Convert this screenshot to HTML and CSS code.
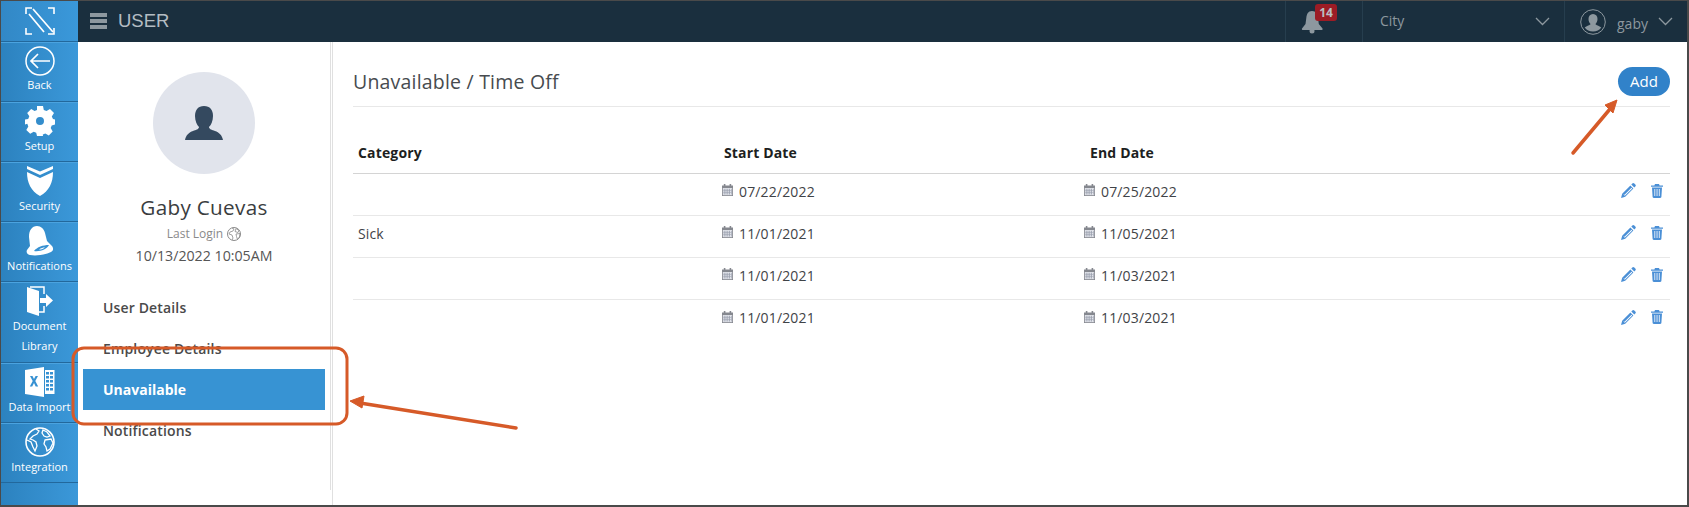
FILE: index.html
```html
<!DOCTYPE html>
<html lang="en">
<head>
<meta charset="utf-8">
<title>User</title>
<link rel="stylesheet" href="styles.css">
</head>
<body>
<svg class="defs" width="0" height="0">
  <symbol id="cal" viewBox="0 0 11 12">
    <path fill="#85888f" d="M0 1.500h1.800V0h1.600v1.500h4.200V0h1.600v1.500H11V12H0z"/>
    <path fill="#e2e4ea" d="M.8 4h9.400v7.200H.8z"/>
    <path fill="#9a9fae" d="M1.800 4.800h.8v5.600h-.8zM3.600 4.800h.8v5.600h-.8zM5.400 4.800h.8v5.600h-.8zM7.200 4.800h.8v5.600h-.8zM9 4.800h.6v5.600H9zM1.200 6.300h8.600v.5H1.200zM1.200 8.200h8.600v.5H1.200z"/>
  </symbol>
  <symbol id="pen" viewBox="0 0 15 15">
    <path fill="#4a8fd6" d="M11.300.6a1.400 1.400 0 0 1 2 0l1 1a1.400 1.400 0 0 1 0 2l-1 1-3-3zM9.400 2.500l3 3-8.200 8.200L0 15l1.200-4.200zM2.200 11.200l1.600 1.600 7.400-7.400-.7-.7-7 7z"/>
  </symbol>
  <symbol id="bin" viewBox="0 0 12 14">
    <path fill="#4a8fd6" d="M4 0h4l.6 1.400H12v1.400H0V1.400h3.400zM1 3.600h10l-.6 9.200c0 .7-.5 1.200-1.200 1.200H2.800c-.7 0-1.200-.5-1.200-1.200z"/>
    <path fill="#cfe0f3" d="M3.200 5h1.100v7H3.200zM5.500 5h1.100v7H5.500zM7.800 5h1.100v7H7.800z"/>
  </symbol>
</svg>
<div class="frame">
  <nav class="rail">
    <div class="rail-logo">
      <svg width="30" height="28" viewBox="0 0 30 28" fill="none" stroke="#fff" stroke-width="1.600">
        <path d="M1 7V1h6M23 1h6v6M1 21v6h6M29 21v6h-6"/>
        <path d="M8 2l20 23M4 7l15 18" stroke-width="1.700"/>
      </svg>
    </div>
    <a class="rail-item rail-back">
      <svg class="rail-icon" width="30" height="30" viewBox="0 0 30 30" fill="none" stroke="#fff" stroke-width="1.500">
        <circle cx="15" cy="15" r="14"/>
        <path d="M25 15H6M13 8l-7 7 7 7" stroke-width="1.700"/>
      </svg>
      <span>Back</span>
    </a>
    <a class="rail-item">
      <svg class="rail-icon" width="30" height="30" viewBox="0 0 30 30">
        <path fill="#fff" fill-rule="evenodd" d="M12 0h6l.8 4 2.700 1.100L25 3l4 4-2.200 3.400L28 13l2 .5v5l-3.300.9-1 2.600 2 3.500-3.900 3.900-3.500-2-2.500 1L18 30h-6l-.8-3.200-2.500-1-3.500 2-3.900-3.900 2-3.500-1-2.600L0 18.500v-5l3.200-.6 1.100-2.600L2.200 7l4-4 3.400 2.100L12 4zM15 11a4 4 0 1 0 0 8 4 4 0 0 0 0-8z"/>
      </svg>
      <span>Setup</span>
    </a>
    <a class="rail-item">
      <svg class="rail-icon" width="28" height="30" viewBox="0 0 28 30">
        <path fill="#fff" d="M1 0l13 5.500L27 0v3L14 9 1 3zM1 6l13 6 13-6c0 11-4 19-13 24C5 25 1 17 1 6z"/>
      </svg>
      <span>Security</span>
    </a>
    <a class="rail-item">
      <svg class="rail-icon" width="30" height="30" viewBox="0 0 30 30">
        <path fill="#fff" d="M12 0c4 0 7 3 8 7l2 8 5 5c2 3 1 5-1 6-6 3-15 4-21 3-3-.5-4-3-3-5l3-4-1-9C4 4 7 0 12 0z"/>
        <path fill="#3791d2" d="M9 25c3-4 9-6 15-6-2 4-9 7-15 6z"/>
        <path fill="#fff" d="M14 23.500c2-1.500 4-2 6-2.300-1.500 1.500-3.500 2.300-6 2.300z"/>
      </svg>
      <span>Notifications</span>
    </a>
    <a class="rail-item rail-tall">
      <svg class="rail-icon" width="28" height="30" viewBox="0 0 28 30">
        <path fill="#fff" d="M1 1l12 4v25L1 26z"/>
        <path fill="none" stroke="#fff" stroke-width="1.500" d="M4 1h14v7M18 20v6h-6"/>
        <path fill="#fff" d="M14 12h6V8l7 6.500-7 6.500v-4h-6z"/>
      </svg>
      <span>Document</span>
      <span>Library</span>
    </a>
    <a class="rail-item">
      <svg class="rail-icon" width="30" height="30" viewBox="0 0 30 30">
        <path fill="#fff" d="M0 3l19-3v30L0 27z"/>
        <path fill="#fff" d="M20 3h9.500v24H20z"/>
        <path fill="#3791d2" d="M21 5h3v2.500h-3zM25 5h3v2.500h-3zM21 9h3v2.500h-3zM25 9h3v2.500h-3zM21 13h3v2.500h-3zM25 13h3v2.500h-3zM21 17h3v2.500h-3zM25 17h3v2.500h-3zM21 21h3v2.500h-3zM25 21h3v2.500h-3z"/>
        <path fill="#3791d2" d="M5 9h2.500l1.500 3 1.600-3H13l-2.700 5 2.900 5.500h-2.500L9 16l-1.800 3.500H4.800L7.700 14z"/>
      </svg>
      <span>Data Import</span>
    </a>
    <a class="rail-item">
      <svg class="rail-icon" width="30" height="30" viewBox="0 0 30 30">
        <circle cx="15" cy="15" r="14" fill="none" stroke="#fff" stroke-width="1.600"/>
        <path fill="none" stroke="#fff" stroke-width="1.300" d="M11 2l3 2-2 3-4 2-3 3 3 1 3 2 1 4-2 5-2-4-2-5-4-2M18 3l4 2 3 4-3 1-3-1-2-3zM20 13l6-1 2 4-3 6-3 2-1-4-2-3z"/>
      </svg>
      <span>Integration</span>
    </a>
  </nav>
  <div class="shell">
    <header class="topbar">
      <div class="menu-btn"><i></i><i></i><i></i></div>
      <div class="page-name">USER</div>
      <div class="cell bell-cell">
        <svg width="24" height="24" viewBox="0 0 24 24">
          <path fill="#8d989f" d="M11 1c4 0 5.500 3 6 7l.8 6 3.700 4.500c.4.800 0 1.500-1 1.500H2c-1 0-1.400-.7-1-1.500L4.500 14l.8-6C5.800 4 7 1 11 1z"/>
          <circle cx="11" cy="21" r="2.500" fill="#8d989f"/>
        </svg>
        <span class="badge">14</span>
      </div>
      <div class="cell city-cell">
        <span>City</span>
        <svg class="chev" width="15" height="9" viewBox="0 0 15 9" fill="none" stroke="#8d989f" stroke-width="1.300"><path d="M1 1l6.500 6.500L14 1"/></svg>
      </div>
      <div class="cell user-cell">
        <svg width="26" height="26" viewBox="0 0 26 26">
          <circle cx="13" cy="13" r="12.300" fill="none" stroke="#8d989f" stroke-width="1"/>
          <path fill="#8d989f" d="M13 5c3 0 4.500 2.200 4.500 5 0 2-.8 3.800-2 5 .2 1.200 4 1.800 5.800 3.500C19.500 21 16.500 22.500 13 22.500s-6.500-1.500-8.300-4C6.500 16.800 10.300 16.200 10.500 15c-1.200-1.200-2-3-2-5 0-2.800 1.500-5 4.500-5z"/>
        </svg>
        <span class="user-name">gaby</span>
        <svg width="15" height="9" viewBox="0 0 15 9" fill="none" stroke="#8d989f" stroke-width="1.300"><path d="M1 1l6.500 6.500L14 1"/></svg>
      </div>
    </header>
    <div class="content">
      <aside class="profile">
        <div class="avatar">
          <svg width="38" height="34" viewBox="0 0 38 34">
            <path fill="#34495f" d="M19 0c6 0 9 4 9 10 0 5-2 9-4 11 0 2 3 3 6 4 4 1.500 7 4 8 9H0c1-5 4-7.500 8-9 3-1 6-2 6-4-2-2-4-6-4-11 0-6 3-10 9-10z"/>
          </svg>
        </div>
        <div class="person">Gaby Cuevas</div>
        <div class="last-login">Last Login
          <svg width="14" height="14" viewBox="0 0 14 14">
            <circle cx="7" cy="7" r="6.500" fill="none" stroke="#8a8a8a"/>
            <path fill="none" stroke="#8a8a8a" stroke-width=".8" d="M5 1l2 1-1 2-3 1-1 2 3 1 1 3-1 2M9 1.500l3 2-1 2-3-1zM9 7l4-.5-.5 3.500-2 2.500-1-3z"/>
          </svg>
        </div>
        <div class="last-date">10/13/2022 10:05AM</div>
        <ul class="side-nav">
          <li>User Details</li>
          <li>Employee Details</li>
          <li class="active">Unavailable</li>
          <li>Notifications</li>
        </ul>
      </aside>
      <main class="main">
        <div class="title-row">
          <h1>Unavailable / Time Off</h1>
          <button class="add">Add</button>
        </div>
        <div class="row head">
          <div>Category</div><div>Start Date</div><div>End Date</div><div></div>
        </div>
        <div class="row">
          <div></div>
          <div class="date"><svg class="cal"><use href="#cal"/></svg>07/22/2022</div>
          <div class="date date-end"><svg class="cal"><use href="#cal"/></svg>07/25/2022</div>
          <div class="actions"><svg class="pen"><use href="#pen"/></svg><svg class="bin"><use href="#bin"/></svg></div>
        </div>
        <div class="row">
          <div>Sick</div>
          <div class="date"><svg class="cal"><use href="#cal"/></svg>11/01/2021</div>
          <div class="date date-end"><svg class="cal"><use href="#cal"/></svg>11/05/2021</div>
          <div class="actions"><svg class="pen"><use href="#pen"/></svg><svg class="bin"><use href="#bin"/></svg></div>
        </div>
        <div class="row">
          <div></div>
          <div class="date"><svg class="cal"><use href="#cal"/></svg>11/01/2021</div>
          <div class="date date-end"><svg class="cal"><use href="#cal"/></svg>11/03/2021</div>
          <div class="actions"><svg class="pen"><use href="#pen"/></svg><svg class="bin"><use href="#bin"/></svg></div>
        </div>
        <div class="row last">
          <div></div>
          <div class="date"><svg class="cal"><use href="#cal"/></svg>11/01/2021</div>
          <div class="date date-end"><svg class="cal"><use href="#cal"/></svg>11/03/2021</div>
          <div class="actions"><svg class="pen"><use href="#pen"/></svg><svg class="bin"><use href="#bin"/></svg></div>
        </div>
      </main>
    </div>
  </div>
  <svg class="marks" width="1689" height="507" viewBox="0 0 1689 507" fill="none">
    <rect x="73" y="348" width="274" height="76" rx="11" stroke="#d65a28" stroke-width="3"/>
    <path d="M516 428L360 403" stroke="#d65a28" stroke-width="3.500" stroke-linecap="round"/>
    <path d="M350 401l14-5-2 12z" fill="#d65a28" stroke="#d65a28"/>
    <path d="M1573 153L1610 109" stroke="#d65a28" stroke-width="3.500" stroke-linecap="round"/>
    <path d="M1617 100l-12 5 8 8z" fill="#d65a28" stroke="#d65a28"/>
  </svg>
</div>
</body>
</html>
```
FILE: styles.css
```css
* { box-sizing: border-box; }
html, body { margin: 0; height: 100%; background: #fff; }
body { font-family: "Open Sans", "Liberation Sans", sans-serif; color: #3f4347; overflow: hidden; }
.defs { position: absolute; }
.frame {
  position: relative;
  display: flex;
  width: 1689px;
  height: 507px;
  border: 1px solid #4a4a4a;
  border-bottom-width: 2px;
  border-right-width: 2px;
}
.rail {
  width: 77px;
  flex: none;
  display: flex;
  flex-direction: column;
  background: linear-gradient(90deg, #2c82bf, #3b98d9);
}
.rail-logo {
  height: 41px;
  display: flex;
  align-items: center;
  justify-content: center;
  background: linear-gradient(90deg, #3288c6, #3a98da);
  border-bottom: 1px solid #22689c;
}
.rail-item {
  height: 60px;
  padding-top: 3px;
  display: flex;
  flex-direction: column;
  align-items: center;
  border-bottom: 1px solid #22689c;
  border-top: 1px solid #4ba3df;
  color: #fff;
  font-size: 11px;
  line-height: 20px;
}
.rail-back span { margin-top: -1px; }
.rail-tall { height: 81px; }
.rail-icon { flex: none; height: 30px; }
.shell { flex: 1; min-width: 0; display: flex; flex-direction: column; }
.topbar {
  height: 41px;
  flex: none;
  display: flex;
  align-items: stretch;
  background: #1a2f3e;
  color: #8d989f;
}
.menu-btn {
  width: 17px;
  margin: 12px 0 0 12px;
  height: 17px;
  display: flex;
  flex-direction: column;
  gap: 2px;
}
.menu-btn i { display: block; height: 4px; background: #8d989f; }
.page-name {
  margin-left: 11px;
  margin-right: auto;
  font-family: "Liberation Sans", sans-serif;
  font-size: 18.500px;
  line-height: 40px;
  color: #b4bdc3;
}
.cell { display: flex; align-items: center; border-left: 1px solid #263e4e; position: relative; }
.bell-cell { width: 77px; padding: 0 0 0 15px; }
.badge {
  position: absolute;
  left: 29px;
  top: 3px;
  width: 22px;
  height: 17px;
  background: #9c1c25;
  border-radius: 3px;
  color: #b9bfc3;
  font-size: 12px;
  font-weight: 700;
  line-height: 17px;
  text-align: center;
}
.city-cell { width: 202px; padding: 0 14px 0 17px; justify-content: space-between; font-size: 14px; }
.city-cell span { position: relative; top: -1px; }
.user-cell { width: 123px; padding-left: 15px; font-size: 14px; }
.user-name { margin: 3px 10px 0 11px; }
.content { flex: 1; min-height: 0; display: flex; }
.profile {
  width: 255px;
  flex: none;
  padding: 30px 2px 0 0;
  display: flex;
  flex-direction: column;
  align-items: center;
  border-right: 1px solid #e0e0e0;
  position: relative;
}
.profile::after {
  content: "";
  position: absolute;
  top: 0;
  right: 1px;
  bottom: 15px;
  width: 1px;
  background: #e0e0e0;
}
.avatar {
  width: 102px;
  height: 102px;
  border-radius: 50%;
  background: #e1e4ec;
  display: flex;
  align-items: center;
  justify-content: center;
}
.person { margin-top: 18px; font-size: 20.700px; line-height: 30px; color: #3a3d40; letter-spacing: 0.300px; }
.last-login {
  margin-top: 3px;
  font-size: 12px;
  line-height: 18px;
  color: #8a8a8a;
  display: flex;
  align-items: center;
  gap: 4px;
}
.last-date { margin-top: 4px; font-size: 14.200px; line-height: 18px; color: #555; }
.side-nav { list-style: none; margin: 22px 0 0; padding: 0 0 0 5px; width: 100%; }
.side-nav li {
  width: 242px;
  height: 41px;
  line-height: 41px;
  padding-left: 20px;
  font-size: 14px;
  font-weight: 600;
  color: #4a4a4a;
  letter-spacing: 0.150px;
}
.side-nav li.active { background: #3793d3; color: #fff; font-weight: 700; letter-spacing: 0; }
.main { flex: 1; min-width: 0; padding: 0 17px 0 20px; }
.title-row {
  height: 65px;
  display: flex;
  justify-content: space-between;
  align-items: center;
  padding-top: 15px;
  border-bottom: 1px solid #e8e8e8;
}
h1 { margin: 0 0 1px; font-size: 19.500px; font-weight: 400; color: #474b4f; letter-spacing: 0.200px; }
.add {
  width: 52px;
  height: 29px;
  margin-bottom: 1px;
  border: 0;
  padding: 0;
  border-radius: 15px;
  background: #3182c9;
  color: #fff;
  font: 500 15px "Open Sans", sans-serif;
}
.row {
  display: grid;
  grid-template-columns: 366px 366px 1fr 100px;
  height: 42px;
  align-items: center;
  padding-left: 5px;
  padding-bottom: 7px;
  font-size: 14px;
  border-bottom: 1px solid #e8e8e8;
  letter-spacing: 0.150px;
}
.row.last { border-bottom: 0; }
.row.head {
  margin-top: 25px;
  padding-bottom: 1px;
  font-weight: 700;
  color: #1d1f21;
  border-bottom: 1px solid #d4d4d4;
}
.date { display: flex; align-items: center; gap: 6px; margin-left: -2px; }
.date-end { margin-left: -6px; }
.cal { width: 11px; height: 12px; flex: none; margin-top: -2px; }
.actions { display: flex; justify-content: flex-end; align-items: center; padding-right: 7px; gap: 15px; margin-top: -1px; }
.pen { width: 15px; height: 15px; }
.bin { width: 12px; height: 14px; }
.marks { position: absolute; left: -1px; top: -1px; pointer-events: none; }
```
